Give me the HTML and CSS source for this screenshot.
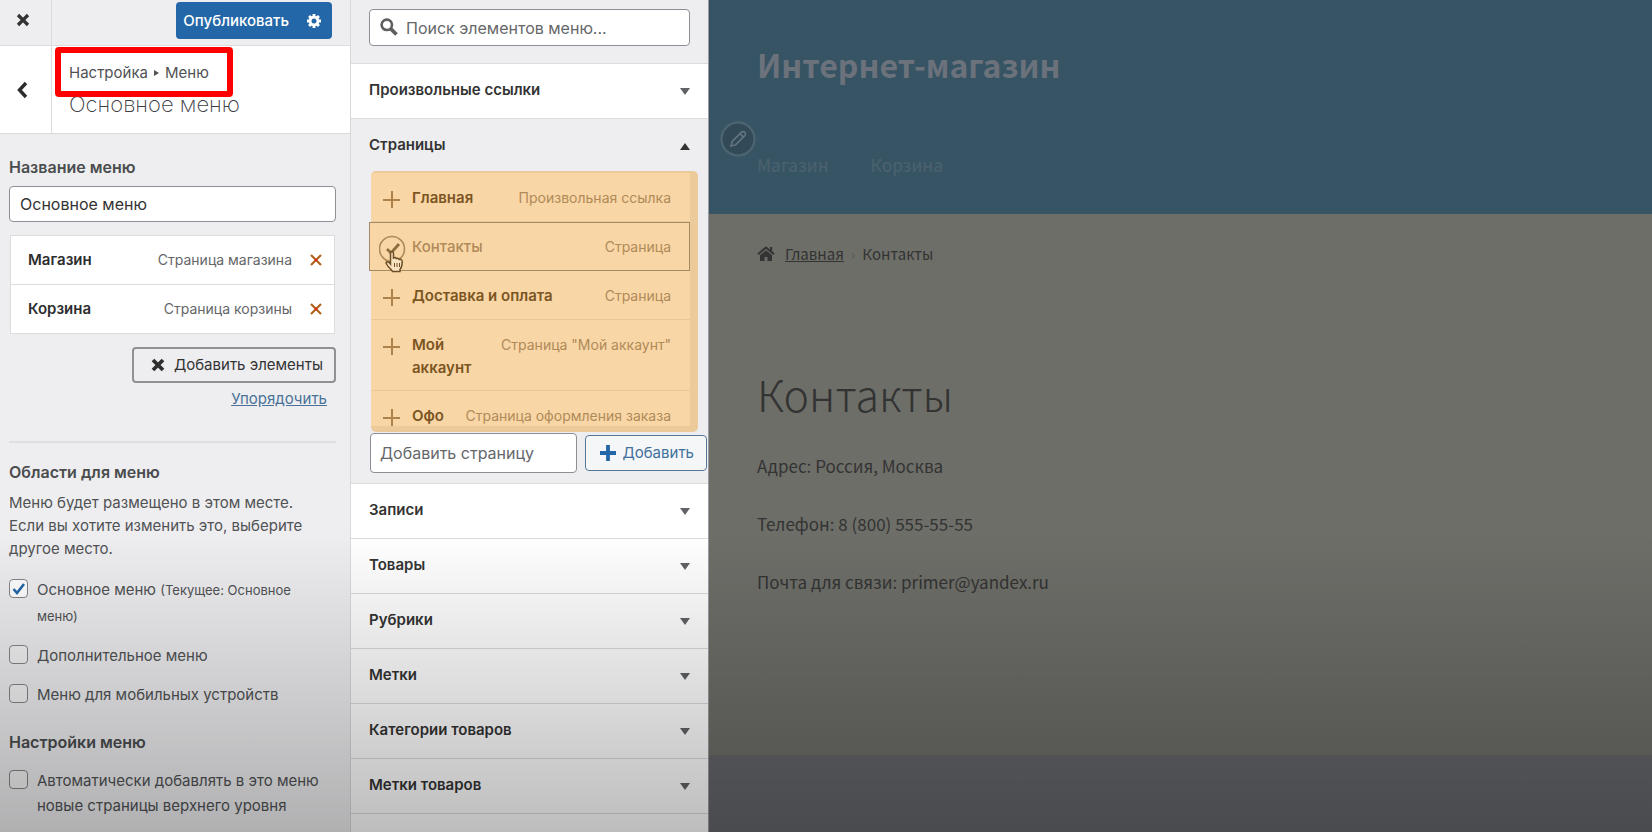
FILE: index.html
```html
<!DOCTYPE html>
<html lang="ru">
<head>
<meta charset="utf-8">
<title>Настройка меню</title>
<link rel="stylesheet" href="styles.css">
</head>
<body>
<div class="app">
  <aside class="side">
    <header class="topbar">
      <button class="close" aria-label="Закрыть"><svg width="14" height="14" viewBox="0 0 14 14"><path d="M2 2l10 10M12 2L2 12" stroke="#333" stroke-width="3.2"/></svg></button>
      <div class="publish">
        <button class="publish-main">Опубликовать</button>
        <button class="publish-gear" aria-label="Настройки публикации"><svg width="16" height="16" viewBox="0 0 16 16"><g fill="#fff"><path d="M6.6 1h2.8v14H6.600zM1 6.600h14v2.800H1z"/><path d="M6.600 1h2.800v14H6.600zM1 6.600h14v2.800H1z" transform="rotate(45 8 8)"/><circle cx="8" cy="8" r="5.400"/></g><circle cx="8" cy="8" r="2.500" fill="#2467a8"/></svg></button>
      </div>
    </header>
    <div class="heading">
      <button class="back" aria-label="Назад"><svg width="12" height="18" viewBox="0 0 12 18"><path d="M10 2L3.500 9l6.500 7" fill="none" stroke="#2b2b2b" stroke-width="3.400"/></svg></button>
      <div class="heading-text">
        <div class="crumb">Настройка <span class="crumb-sep"></span> Меню</div>
        <h1 class="menu-title">Основное меню</h1>
        <span class="mark"></span>
      </div>
    </div>
    <div class="side-body">
      <label class="label" for="menu-name">Название меню</label>
      <input class="field" id="menu-name" type="text" value="Основное меню">
      <ul class="items">
        <li class="item"><b>Магазин</b><span class="item-type">Страница магазина</span><button class="remove" aria-label="Удалить Магазин"><svg width="12" height="12" viewBox="0 0 12 12"><path d="M1 1l10 10M11 1L1 11" stroke="#b1631d" stroke-width="2.200"/><circle cx="6" cy="6" r="1.300" fill="#e8251b"/></svg></button></li>
        <li class="item"><b>Корзина</b><span class="item-type">Страница корзины</span><button class="remove" aria-label="Удалить Корзина"><svg width="12" height="12" viewBox="0 0 12 12"><path d="M1 1l10 10M11 1L1 11" stroke="#b1631d" stroke-width="2.200"/><circle cx="6" cy="6" r="1.300" fill="#e8251b"/></svg></button></li>
      </ul>
      <div class="actions">
        <button class="add-items"><svg width="14" height="14" viewBox="0 0 14 14"><path d="M2 2l10 10M12 2L2 12" stroke="#2e2e2e" stroke-width="3.800"/></svg>Добавить элементы</button>
        <a class="reorder" href="#">Упорядочить</a>
      </div>
      <h2 class="label">Области для меню</h2>
      <p class="hint">Меню будет размещено в этом месте. Если вы хотите изменить это, выберите другое место.</p>
      <label class="check"><input type="checkbox" checked><span>Основное меню <small>(Текущее: Основное меню)</small></span></label>
      <label class="check"><input type="checkbox"><span>Дополнительное меню</span></label>
      <label class="check"><input type="checkbox"><span>Меню для мобильных устройств</span></label>
      <h2 class="label label-settings">Настройки меню</h2>
      <label class="check"><input type="checkbox"><span>Автоматически добавлять в это меню новые страницы верхнего уровня</span></label>
    </div>
  </aside>

  <section class="picker">
    <div class="search">
      <svg class="search-icon" width="18" height="18" viewBox="0 0 18 18"><circle cx="6.800" cy="6.800" r="5.200" fill="none" stroke="#5c5e60" stroke-width="2.600"/><path d="M10.500 10.500l6 6" stroke="#5c5e60" stroke-width="3.800"/></svg>
      <input class="search-field" type="search" aria-label="Поиск" placeholder="Поиск элементов меню...">
    </div>
    <button class="section">Произвольные ссылки<i class="arrow"></i></button>
    <div class="open">
      <button class="section section-open">Страницы<i class="arrow arrow-up"></i></button>
      <div class="pages">
        <ul class="page-list">
          <li class="page"><i class="plus"></i><b>Главная</b><span>Произвольная ссылка</span></li>
          <li class="page page-added"><svg class="added" width="28" height="38" viewBox="0 0 28 38"><circle cx="13" cy="14" r="12.500" fill="none" stroke="#b08a58" stroke-width="1.600"/><path d="M8 14l4 4 8-9" fill="none" stroke="#8d6c3e" stroke-width="2.800"/><path d="M11.500 28V18.500q0-1.700 1.500-1.700t1.500 1.700V23q2-1 2.800.5 2.200-.8 2.900.9 2.800-.5 3 2.300 0 5.300-2.200 7.800v2h-7.500c-1.500-3-6-5.500-6.500-9q2-1.800 4.500 1.500z" fill="#f9e2bf" stroke="#6d4f27" stroke-width="1.500"/><path d="M15.500 28v4M18 28v4M20.500 28v4" stroke="#6d4f27"/></svg><b>Контакты</b><span>Страница</span></li>
          <li class="page"><i class="plus"></i><b>Доставка и оплата</b><span>Страница</span></li>
          <li class="page"><i class="plus"></i><b>Мой аккаунт</b><span>Страница "Мой аккаунт"</span></li>
          <li class="page"><i class="plus"></i><b>Офо</b><span>Страница оформления заказа</span></li>
        </ul>
      </div>
      <div class="new-page">
        <input class="new-field" type="text" aria-label="Добавить страницу" placeholder="Добавить страницу">
        <button class="new-button"><svg width="16" height="16" viewBox="0 0 16 16"><path d="M8 0v16M0 8h16" stroke="#2467a8" stroke-width="3.800"/></svg>Добавить</button>
      </div>
    </div>
    <button class="section">Записи<i class="arrow"></i></button>
    <button class="section">Товары<i class="arrow"></i></button>
    <button class="section">Рубрики<i class="arrow"></i></button>
    <button class="section">Метки<i class="arrow"></i></button>
    <button class="section">Категории товаров<i class="arrow"></i></button>
    <button class="section">Метки товаров<i class="arrow"></i></button>
    <div class="picker-rest"></div>
  </section>

  <main class="preview">
    <header class="shop-head">
      <div class="shop-name">Интернет-магазин</div>
      <nav class="shop-nav">
        <span class="edit"><svg width="36" height="36" viewBox="0 0 36 36"><circle cx="18" cy="18" r="16.500" fill="#324a57" stroke="#4c6370" stroke-width="2.400"/><path d="M11 25l1.200-4.500 9.300-9.300q2-1.200 3.300.1t.1 3.300l-9.300 9.300zM20 12.700l3.300 3.300" fill="none" stroke="#667783" stroke-width="1.500"/></svg></span>
        <a href="#">Магазин</a><a href="#">Корзина</a>
      </nav>
    </header>
    <div class="content">
      <nav class="trail">
        <svg width="18" height="16" viewBox="0 0 18 16"><path d="M9 4.300l6 5V15h-4.500v-4h-3v4H3V9.300z" fill="#333"/><path d="M1 8.200l8-6.700 8 6.700" fill="none" stroke="#333" stroke-width="2"/><path d="M13 1h2.200v4.500L13 3.700z" fill="#333"/></svg>
        <a href="#">Главная</a><span class="trail-sep">›</span><span>Контакты</span>
      </nav>
      <h1 class="page-title">Контакты</h1>
      <p>Адрес: Россия, Москва</p>
      <p>Телефон: 8 (800) 555-55-55</p>
      <p>Почта для связи: primer@yandex.ru</p>
    </div>
    <footer class="shop-foot"></footer>
  </main>
</div>
</body>
</html>
```
FILE: styles.css
```css
* { box-sizing: border-box; }
body { margin: 0; font: 15px/24px Inter, "Liberation Sans", sans-serif; color: #505254; }
button, input { font: inherit; color: inherit; }
button { margin: 0; padding: 0; border: 0; background: none; text-align: left; cursor: pointer; }
ul { list-style: none; margin: 0; padding: 0; }
h1, h2, p { margin: 0; }
svg { flex: none; display: block; }

.app { position: relative; display: grid; grid-template-columns: 351px 358px 1fr; min-height: 100vh; }
.app::after {
  content: ""; position: absolute; inset: 0; pointer-events: none;
  background: linear-gradient(transparent 64%, rgba(0, 0, 0, .26));
}

.side { background: #eeeef0; border-right: 1px solid #d9d9dc; }
.topbar { display: flex; justify-content: space-between; height: 46px; padding-right: 18px; border-bottom: 1px solid #dcdcde; }
.close, .back { display: flex; align-items: center; justify-content: center; width: 52px; border-right: 1px solid #dcdcde; }
.close { padding-bottom: 6px; padding-right: 5px; }
.back { padding-right: 7px; }
.publish { display: flex; align-self: flex-start; margin-top: 2px; height: 37px; border-radius: 4px; background: #2467a8; color: #fff; }
.publish-main { padding: 0 7px; font-weight: 500; }
.publish-gear { display: flex; align-items: center; padding: 0 10px; }
.heading { display: flex; height: 88px; background: #fff; border-bottom: 1px solid #d9d9dc; }
.heading-text { position: relative; padding: 15px 0 0 17px; }
.crumb { display: flex; align-items: center; gap: 6px; }
.crumb-sep { border-left: 5px solid #505254; border-top: 3px solid transparent; border-bottom: 3px solid transparent; }
.menu-title { font-size: 22px; line-height: 32px; font-weight: 200; padding-top: 3px; color: #3c4044; }
.mark { position: absolute; left: 3px; top: 1px; width: 178px; height: 50px; border: 6px solid #f00; border-radius: 4px; }

.side-body { padding: 21px 14px 0 9px; }
.label { display: block; font-size: 16px; line-height: 24px; font-weight: 600; color: #4a4c4e; }
.field { display: block; width: 100%; height: 36px; margin-top: 7px; padding: 0 10px; border: 1px solid #8c8f94; border-radius: 4px; background: #fff; font-size: 16px; color: #333; }
.items { margin: 13px 1px 0; border: 1px solid #dcdcde; background: #fff; }
.item { display: flex; align-items: center; height: 48px; padding: 0 12px 0 17px; }
.item + .item { height: 49px; border-top: 1px solid #dcdcde; }
.item b { font-weight: 600; color: #2c2d2e; }
.item-type { margin-left: auto; font-size: 14px; color: #646669; }
.remove { padding: 4px 0 4px 18px; }
.actions { display: flex; flex-direction: column; align-items: flex-end; padding-bottom: 30px; margin-top: 13px; border-bottom: 2px solid #dfdfe1; }
.add-items { display: flex; align-items: center; gap: 9px; height: 36px; padding: 0 11px 0 17px; border: 2px solid #8f9194; border-radius: 4px; color: #333; }
.reorder { margin: 4px 9px 0 0; color: #4a7298; }
.actions + .label { padding-top: 17px; }
.hint { line-height: 23px; padding: 7px 20px 0 0; margin-bottom: 17px; }
.check { display: flex; gap: 9px; line-height: 25px; padding-right: 12px; margin-bottom: 14px; }
.check small { font-size: 13px; }
.check input { appearance: none; flex: none; width: 19px; height: 19px; margin: 2px 0 0; border: 1px solid #85858a; border-radius: 4px; background: rgba(255, 255, 255, .3); }
.check input:checked { background: url("data:image/svg+xml,%3Csvg xmlns='http://www.w3.org/2000/svg' viewBox='0 0 17 17'%3E%3Cpath d='M3.500 9l3.500 4 7-9' fill='none' stroke='%232467a8' stroke-width='2.600'/%3E%3C/svg%3E") #fff; }
.label-settings { padding: 9px 0 10px; margin-bottom: 4px; }

.picker { display: flex; flex-direction: column; background: #eeeef0; border-right: 1px solid #9a9ca0; }
.search { position: relative; padding: 9px 18px 17px; }
.search-icon { position: absolute; left: 29px; top: 18px; }
.search-field { display: block; width: 100%; height: 37px; padding: 0 10px 0 36px; border: 1px solid #8c8f94; border-radius: 4px; background: #fff; font-size: 16px; }
.search-field::placeholder, .new-field::placeholder { color: #65676a; opacity: 1; }
.section { display: flex; justify-content: space-between; align-items: center; width: 100%; height: 55px; padding: 0 18px 2px; border-top: 1px solid #dcdcde; background: #fff; font-weight: 600; color: #333; }
.section-open { background: none; height: 53px; padding-bottom: 0; }
.arrow { border: 5px solid transparent; border-top: 7px solid #606265; border-bottom: 0; margin-top: 2px; }
.arrow-up { border-top: 0; border-bottom: 7px solid #333; }
.pages { margin: 0 10px 0 20px; padding: 2px 8px 6px 0; border-radius: 5px; background: #edca9a; }
.page-list { height: 253px; margin-left: -2px; overflow: hidden; }
.page { display: flex; align-items: flex-start; margin-left: 2px; min-height: 49px; padding: 13px 19px 11px 12px; background: #f9d6a6; border-bottom: 1px solid #e9c897; line-height: 23px; color: #b08a58; }
.page b { flex: 0 1 auto; margin-left: 12px; font-weight: 600; color: #7b5522; }
.page span { margin-left: auto; padding-left: 12px; font-size: 14px; white-space: nowrap; }
.page-added { margin-left: 0; width: 321px; height: 49px; padding: 12px 18px 0 9px; border: 1px solid #a38b66; }
.page-added b { margin-left: 5px; font-weight: 500; color: #b08a58; }
.added { margin-bottom: -16px; }
.plus { flex: none; width: 17px; height: 17px; margin-top: 5px; background: linear-gradient(#ad824b, #ad824b) center / 100% 2px no-repeat, linear-gradient(#ad824b, #ad824b) center / 2px 100% no-repeat; }
.new-page { display: flex; align-items: center; gap: 8px; padding: 1px 1px 10px 19px; }
.new-field { flex: 1; min-width: 0; height: 40px; padding: 0 9px; border: 1px solid #8c8f94; border-radius: 4px; background: #fff; font-size: 16px; }
.new-button { display: flex; align-items: center; gap: 6px; height: 36px; padding: 0 12px 0 14px; border: 1px solid #55779a; border-radius: 4px; background: #f5f6f8; color: #41709c; }
.picker-rest { flex: 1; border-top: 1px solid #dcdcde; background: #fff; }

.preview { display: flex; flex-direction: column; font: 17px/28px "Noto Sans CJK SC", "Open Sans", sans-serif; background: #6d6e68; color: #333; }
.shop-head { height: 214px; padding: 40px 48px 0; background: #365464; }
.shop-name { font-size: 32px; line-height: 48px; font-weight: 700; color: #6c727b; }
.shop-nav { position: relative; display: flex; gap: 42px; padding-top: 63px; }
.shop-nav a { color: #49606d; text-decoration: none; font-weight: 500; }
.edit { position: absolute; left: -37px; top: 33px; }
.content { flex: 1; padding: 26px 48px 0; }
.trail { display: flex; align-items: center; gap: 10px; font-size: 15px; }
.trail a { color: #333; }
.trail-sep { color: #555750; margin: 0 -3px; }
.page-title { padding: 95px 0 29px; font-size: 43px; line-height: 60px; font-weight: 300; }
.content p { margin-bottom: 30px; }
.shop-foot { height: 77px; background: #64656a; }
```
